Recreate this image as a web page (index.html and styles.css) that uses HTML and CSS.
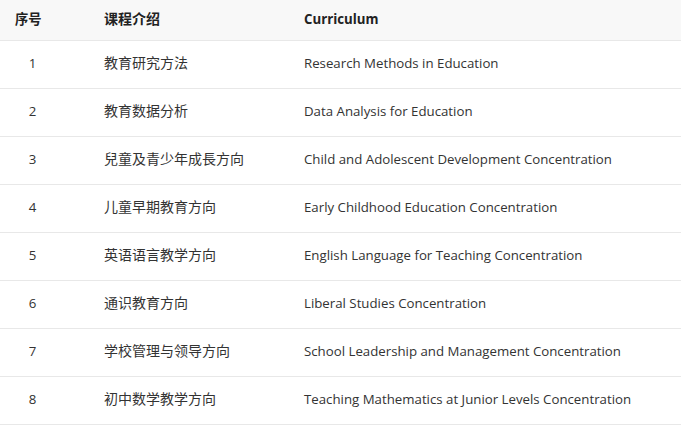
FILE: index.html
```html
<!DOCTYPE html>
<html lang="zh">
<head>
<meta charset="utf-8">
<link rel="stylesheet" href="styles.css">
</head>
<body>
<table class="curr">
  <thead>
    <tr><th class="c-no">序号</th><th class="c-cn">课程介绍</th><th class="c-en">Curriculum</th></tr>
  </thead>
  <tbody>
    <tr><td class="c-no">1</td><td class="c-cn">教育研究方法</td><td class="c-en">Research Methods in Education</td></tr>
    <tr><td class="c-no">2</td><td class="c-cn">教育数据分析</td><td class="c-en">Data Analysis for Education</td></tr>
    <tr><td class="c-no">3</td><td class="c-cn">兒童及青少年成長方向</td><td class="c-en">Child and Adolescent Development Concentration</td></tr>
    <tr><td class="c-no">4</td><td class="c-cn">儿童早期教育方向</td><td class="c-en">Early Childhood Education Concentration</td></tr>
    <tr><td class="c-no">5</td><td class="c-cn">英语语言教学方向</td><td class="c-en">English Language for Teaching Concentration</td></tr>
    <tr><td class="c-no">6</td><td class="c-cn">通识教育方向</td><td class="c-en">Liberal Studies Concentration</td></tr>
    <tr><td class="c-no">7</td><td class="c-cn">学校管理与领导方向</td><td class="c-en">School Leadership and Management Concentration</td></tr>
    <tr><td class="c-no">8</td><td class="c-cn">初中数学教学方向</td><td class="c-en">Teaching Mathematics at Junior Levels Concentration</td></tr>
  </tbody>
</table>
</body>
</html>
```
FILE: styles.css
```css
html, body { margin: 0; padding: 0; background: #fff; }
body {
  font-family: "Open Sans", "Noto Sans CJK SC", sans-serif;
  font-size: 13.25px;
  color: #333;
}
.curr {
  width: 681px;
  border-collapse: collapse;
  table-layout: fixed;
}
.curr th, .curr td {
  padding: 0 0 3px 16px;
  text-align: left;
  border-bottom: 1px solid #e8e8e8;
  white-space: nowrap;
  line-height: 18px;
}
.curr thead th {
  height: 37px;
  background: #f8f8f8;
  font-weight: 700;
  color: #222;
}
.curr tbody td { height: 44px; }
.curr th.c-no { width: 73px; padding-left: 15px; }
.curr td.c-no { padding: 0 23px 3px 0; text-align: center; }
.curr .c-cn { width: 184px; font-size: 14px; }
.curr .c-en { width: auto; }
```
